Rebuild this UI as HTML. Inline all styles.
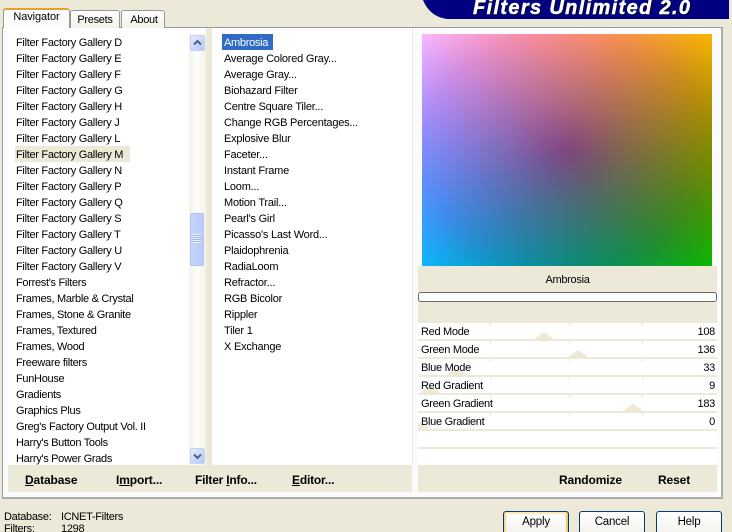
<!DOCTYPE html>
<html><head><meta charset="utf-8">
<style>
*{box-sizing:border-box}
html,body{margin:0;padding:0;width:732px;height:532px;overflow:hidden}
#w{width:732px;height:532px;overflow:hidden;position:relative;background:#ece9d8;font-family:"Liberation Sans",sans-serif;font-size:11px;color:#000;letter-spacing:-.3px}
.a{position:absolute}
.tab{position:absolute;background:linear-gradient(#fff,#f3f2ea);border:1px solid #919b9c;border-bottom:none;border-radius:3px 3px 0 0;text-align:center}
.t{position:absolute;white-space:nowrap;line-height:18px;height:16px}
.m{letter-spacing:-.22px}
.row{position:absolute;left:418px;width:299px;height:16px;background:#fff;overflow:hidden}
.row span{position:absolute;top:0;line-height:18px;white-space:nowrap}
.th{position:absolute;top:9px;width:0;height:0;border-left:10px solid transparent;border-right:10px solid transparent;border-bottom:7px solid #ece9d8}
.tk{position:absolute;top:0;width:1px;height:3px;background:#ece9d8}
.b{position:absolute;font-weight:bold;font-size:12px;line-height:16px;top:472px;white-space:nowrap;letter-spacing:-.12px}
.btn{position:absolute;top:511px;width:66px;height:30px;border:1px solid #003c74;border-radius:3px;background:linear-gradient(#fff,#f4f3ee 70%,#e6e3d6);text-align:center;line-height:21px;font-size:11.5px;letter-spacing:-.2px}
.sb{position:absolute;left:190px;width:15px;height:16px;background:linear-gradient(135deg,#e4ebfd,#b5c8f7);border:1px solid #c3d2f8;border-radius:2px}
</style></head><body><div id="w">

<!-- banner -->
<svg class="a" style="left:420px;top:0" width="312" height="20"><path d="M3 0H309V19H28C15 18 7 10 3 0Z" fill="#000080"/></svg>
<div class="a" style="left:473px;top:-2px;color:#fff;font:italic bold 20px/20px 'Liberation Sans',sans-serif;letter-spacing:1.35px;white-space:nowrap;-webkit-text-stroke:.5px #fff;text-shadow:1px 1px 0 #000">Filters Unlimited 2.0</div>

<!-- panel -->
<div class="a" style="left:2px;top:27px;width:721px;height:472px;background:#fbfbfd;border:1px solid #919b9c;border-right:2px solid #a9aeae;border-bottom:2px solid #a9aeae"></div>

<!-- tabs -->
<div class="tab" style="left:70px;top:10px;width:50px;height:18px;line-height:19px">Presets</div>
<div class="tab" style="left:121px;top:10px;width:44px;height:18px;line-height:19px;padding-left:2px">About</div>
<div class="tab" style="left:3px;top:8px;width:67px;height:20px;background:#fcfcfe;border-top:2px solid #f0a020;line-height:15px;letter-spacing:-.1px;border-color:#e8a030 #919b9c #fff">Navigator</div>

<!-- left list -->
<div class="a" style="left:8px;top:28px;width:198px;height:437px;background:#fff"></div>
<div class="a" style="left:189px;top:34px;width:17px;height:431px;background:linear-gradient(90deg,#f3f1e8,#fdfdfa 50%,#f3f1e8)"></div>
<div class="a" style="left:206px;top:28px;width:6px;height:437px;background:#ece9d8"></div>
<div class="a" style="left:15px;top:146px;width:115px;height:16px;background:#ece9d8"></div>
<div class="t" style="left:16px;top:34px">Filter Factory Gallery D</div>
<div class="t" style="left:16px;top:50px">Filter Factory Gallery E</div>
<div class="t" style="left:16px;top:66px">Filter Factory Gallery F</div>
<div class="t" style="left:16px;top:82px">Filter Factory Gallery G</div>
<div class="t" style="left:16px;top:98px">Filter Factory Gallery H</div>
<div class="t" style="left:16px;top:114px">Filter Factory Gallery J</div>
<div class="t" style="left:16px;top:130px">Filter Factory Gallery L</div>
<div class="t" style="left:16px;top:146px">Filter Factory Gallery M</div>
<div class="t" style="left:16px;top:162px">Filter Factory Gallery N</div>
<div class="t" style="left:16px;top:178px">Filter Factory Gallery P</div>
<div class="t" style="left:16px;top:194px">Filter Factory Gallery Q</div>
<div class="t" style="left:16px;top:210px">Filter Factory Gallery S</div>
<div class="t" style="left:16px;top:226px">Filter Factory Gallery T</div>
<div class="t" style="left:16px;top:242px">Filter Factory Gallery U</div>
<div class="t" style="left:16px;top:258px">Filter Factory Gallery V</div>
<div class="t" style="left:16px;top:274px">Forrest's Filters</div>
<div class="t" style="left:16px;top:290px">Frames, Marble &amp; Crystal</div>
<div class="t" style="left:16px;top:306px">Frames, Stone &amp; Granite</div>
<div class="t" style="left:16px;top:322px">Frames, Textured</div>
<div class="t" style="left:16px;top:338px">Frames, Wood</div>
<div class="t" style="left:16px;top:354px">Freeware filters</div>
<div class="t" style="left:16px;top:370px">FunHouse</div>
<div class="t" style="left:16px;top:386px">Gradients</div>
<div class="t" style="left:16px;top:402px">Graphics Plus</div>
<div class="t" style="left:16px;top:418px">Greg's Factory Output Vol. II</div>
<div class="t" style="left:16px;top:434px">Harry's Button Tools</div>
<div class="t" style="left:16px;top:450px">Harry's Power Grads</div>

<!-- scrollbar -->
<div class="sb" style="top:35px"><svg width="13" height="14"><path d="M3 8.5L6.5 5L10 8.5" fill="none" stroke="#4d6185" stroke-width="2"/></svg></div>
<div class="sb" style="top:448px"><svg width="13" height="14"><path d="M3 5.5L6.5 9L10 5.5" fill="none" stroke="#4d6185" stroke-width="2"/></svg></div>
<div class="a" style="left:190px;top:213px;width:14px;height:53px;background:linear-gradient(90deg,#c8d5fb,#b9cbfb);border:1px solid #b0c4f5;border-radius:2px"></div>
<div class="a" style="left:193px;top:234px;width:8px;height:9px;background:repeating-linear-gradient(#eef2fe 0 1px,#9db3ee 1px 2px)"></div>

<!-- middle list -->
<div class="a" style="left:212px;top:28px;width:200px;height:437px;background:#fff"></div>
<div class="a" style="left:222px;top:34px;width:51px;height:16px;background:#316ac5"></div>
<div class="t" style="left:224px;top:34px;color:#fff">Ambrosia</div>
<div class="t m" style="left:224px;top:50px">Average Colored Gray...</div>
<div class="t m" style="left:224px;top:66px">Average Gray...</div>
<div class="t m" style="left:224px;top:82px">Biohazard Filter</div>
<div class="t m" style="left:224px;top:98px">Centre Square Tiler...</div>
<div class="t m" style="left:224px;top:114px">Change RGB Percentages...</div>
<div class="t m" style="left:224px;top:130px">Explosive Blur</div>
<div class="t m" style="left:224px;top:146px">Faceter...</div>
<div class="t m" style="left:224px;top:162px">Instant Frame</div>
<div class="t m" style="left:224px;top:178px">Loom...</div>
<div class="t m" style="left:224px;top:194px">Motion Trail...</div>
<div class="t m" style="left:224px;top:210px">Pearl's Girl</div>
<div class="t m" style="left:224px;top:226px">Picasso's Last Word...</div>
<div class="t m" style="left:224px;top:242px">Plaidophrenia</div>
<div class="t m" style="left:224px;top:258px">RadiaLoom</div>
<div class="t m" style="left:224px;top:274px">Refractor...</div>
<div class="t m" style="left:224px;top:290px">RGB Bicolor</div>
<div class="t m" style="left:224px;top:306px">Rippler</div>
<div class="t m" style="left:224px;top:322px">Tiler 1</div>
<div class="t m" style="left:224px;top:338px">X Exchange</div>
<div class="a" style="left:412px;top:28px;width:1px;height:437px;background:#ece9d8"></div>

<!-- left buttons -->
<div class="a" style="left:8px;top:465px;width:404px;height:27px;background:#ece9d8"></div>
<div class="b" style="left:25px"><u>D</u>atabase</div>
<div class="b" style="left:116px">I<u>m</u>port...</div>
<div class="b" style="left:195px;letter-spacing:-.2px">Filter <u>I</u>nfo...</div>
<div class="b" style="left:292px;letter-spacing:-.2px"><u>E</u>ditor...</div>

<!-- preview -->
<div class="a" style="left:422px;top:34px;width:290px;height:232px;background:#000;isolation:isolate;overflow:hidden">
  <div class="a" style="inset:0;background:linear-gradient(180deg,#f80000,#800000 50%,#0c0000)"></div>
  <div class="a" style="inset:0;mix-blend-mode:screen;background:linear-gradient(90deg,#0000ff,#000080 50%,#000000)"></div>
  <div class="a" style="inset:0;mix-blend-mode:screen;background:radial-gradient(ellipse farthest-corner at 50% 50%,#004600 0,#006a00 30%,#008c00 70.7%,#00b800 100%)"></div>
</div>

<!-- right side -->
<div class="a" style="left:418px;top:266px;width:299px;height:57px;background:#ece9d8"></div>
<div class="t" style="left:418px;top:271px;width:299px;text-align:center">Ambrosia</div>
<div class="a" style="left:418px;top:292px;width:299px;height:10px;background:#fff;border:1px solid #6a6a6a;border-radius:3px"></div>
<div class="a" style="left:418px;top:323px;width:299px;height:142px;background:#ece9d8"></div>

<div class="row" style="top:323px"><i class="tk" style="left:72px"></i><i class="tk" style="left:151px"></i><i class="tk" style="left:224px"></i><i class="th" style="left:116px"></i><span style="left:3px">Red Mode</span><span style="right:2px">108</span></div>
<div class="row" style="top:341px"><i class="tk" style="left:72px"></i><i class="tk" style="left:151px"></i><i class="tk" style="left:224px"></i><i class="th" style="left:150px"></i><span style="left:3px">Green Mode</span><span style="right:2px">136</span></div>
<div class="row" style="top:359px"><i class="tk" style="left:72px"></i><i class="tk" style="left:151px"></i><i class="tk" style="left:224px"></i><i class="th" style="left:28px"></i><span style="left:3px">Blue Mode</span><span style="right:2px">33</span></div>
<div class="row" style="top:377px"><i class="tk" style="left:72px"></i><i class="tk" style="left:151px"></i><i class="tk" style="left:224px"></i><i class="th" style="left:2px"></i><span style="left:3px">Red Gradient</span><span style="right:2px">9</span></div>
<div class="row" style="top:395px"><i class="tk" style="left:72px"></i><i class="tk" style="left:151px"></i><i class="tk" style="left:224px"></i><i class="th" style="left:205px"></i><span style="left:3px">Green Gradient</span><span style="right:2px">183</span></div>
<div class="row" style="top:413px"><i class="tk" style="left:72px"></i><i class="tk" style="left:151px"></i><i class="tk" style="left:224px"></i><i class="th" style="left:-9px"></i><span style="left:3px">Blue Gradient</span><span style="right:2px">0</span></div>
<div class="row" style="top:431px"></div>
<div class="row" style="top:449px"></div>

<div class="a" style="left:418px;top:465px;width:299px;height:27px;background:#ece9d8"></div>
<div class="b" style="left:559px">Randomize</div>
<div class="b" style="left:658px">Reset</div>

<!-- status -->
<div class="t" style="left:4px;top:508px">Database:</div>
<div class="t" style="left:61px;top:508px">ICNET-Filters</div>
<div class="t" style="left:4px;top:520px">Filters:</div>
<div class="t" style="left:61px;top:520px">1298</div>

<!-- buttons -->
<div class="btn" style="left:503px;box-shadow:inset -2px 0 0 #f6c56b,inset 2px 0 0 #fbd68e,inset 0 2px 0 #fce8b8">Apply</div>
<div class="btn" style="left:579px">Cancel</div>
<div class="btn" style="left:656px">Help</div>

</div></body></html>
